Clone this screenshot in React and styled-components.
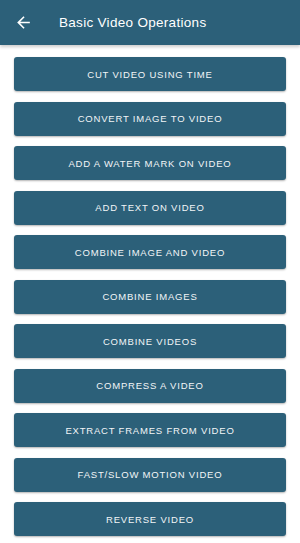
import styled, { createGlobalStyle } from 'styled-components';

const GlobalStyle = createGlobalStyle`
  body {
    margin: 0;
    background: #ffffff;
    font-family: "Liberation Sans", Arial, sans-serif;
  }
`;

const Page = styled.div`
  width: 300px;
  height: 543px;
  overflow: hidden;
  background: #ffffff;
`;

const AppBar = styled.div`
  display: flex;
  align-items: center;
  height: 45px;
  padding: 0 14px;
  background: #2c6079;
  box-shadow: 0 2px 3px rgba(0, 0, 0, 0.2);
`;

const BackButton = styled.button`
  display: flex;
  align-items: center;
  padding: 0;
  border: none;
  background: none;
  color: #ffffff;
`;

const Title = styled.h1`
  margin: 0 0 0 26px;
  font-size: 13.5px;
  font-weight: normal;
  color: #ffffff;
  letter-spacing: 0.3px;
`;

const ButtonList = styled.ul`
  display: flex;
  flex-direction: column;
  gap: 10.5px;
  margin: 0;
  padding: 12px 14px 0 14px;
  list-style: none;
`;

const OperationButton = styled.li`
  display: flex;
  align-items: center;
  justify-content: center;
  height: 34px;
  border-radius: 3px;
  background: #2c6079;
  color: #f2f5f7;
  font-size: 9.5px;
  letter-spacing: 0.8px;
  box-shadow: 0 1px 2px rgba(0, 0, 0, 0.3);
  cursor: pointer;
`;

const operations = [
  'CUT VIDEO USING TIME',
  'CONVERT IMAGE TO VIDEO',
  'ADD A WATER MARK ON VIDEO',
  'ADD TEXT ON VIDEO',
  'COMBINE IMAGE AND VIDEO',
  'COMBINE IMAGES',
  'COMBINE VIDEOS',
  'COMPRESS A VIDEO',
  'EXTRACT FRAMES FROM VIDEO',
  'FAST/SLOW MOTION VIDEO',
  'REVERSE VIDEO',
];

export default function App() {
  return (
    <Page>
      <GlobalStyle />
      <AppBar>
        <BackButton>
          <svg width="19" height="19" viewBox="0 0 24 24" fill="currentColor">
            <path d="M20 11H7.83l5.59-5.59L12 4l-8 8 8 8 1.41-1.41L7.83 13H20v-2z" />
          </svg>
        </BackButton>
        <Title>Basic Video Operations</Title>
      </AppBar>
      <ButtonList>
        {operations.map(op => (
          <OperationButton key={op}>{op}</OperationButton>
        ))}
      </ButtonList>
    </Page>
  );
}
